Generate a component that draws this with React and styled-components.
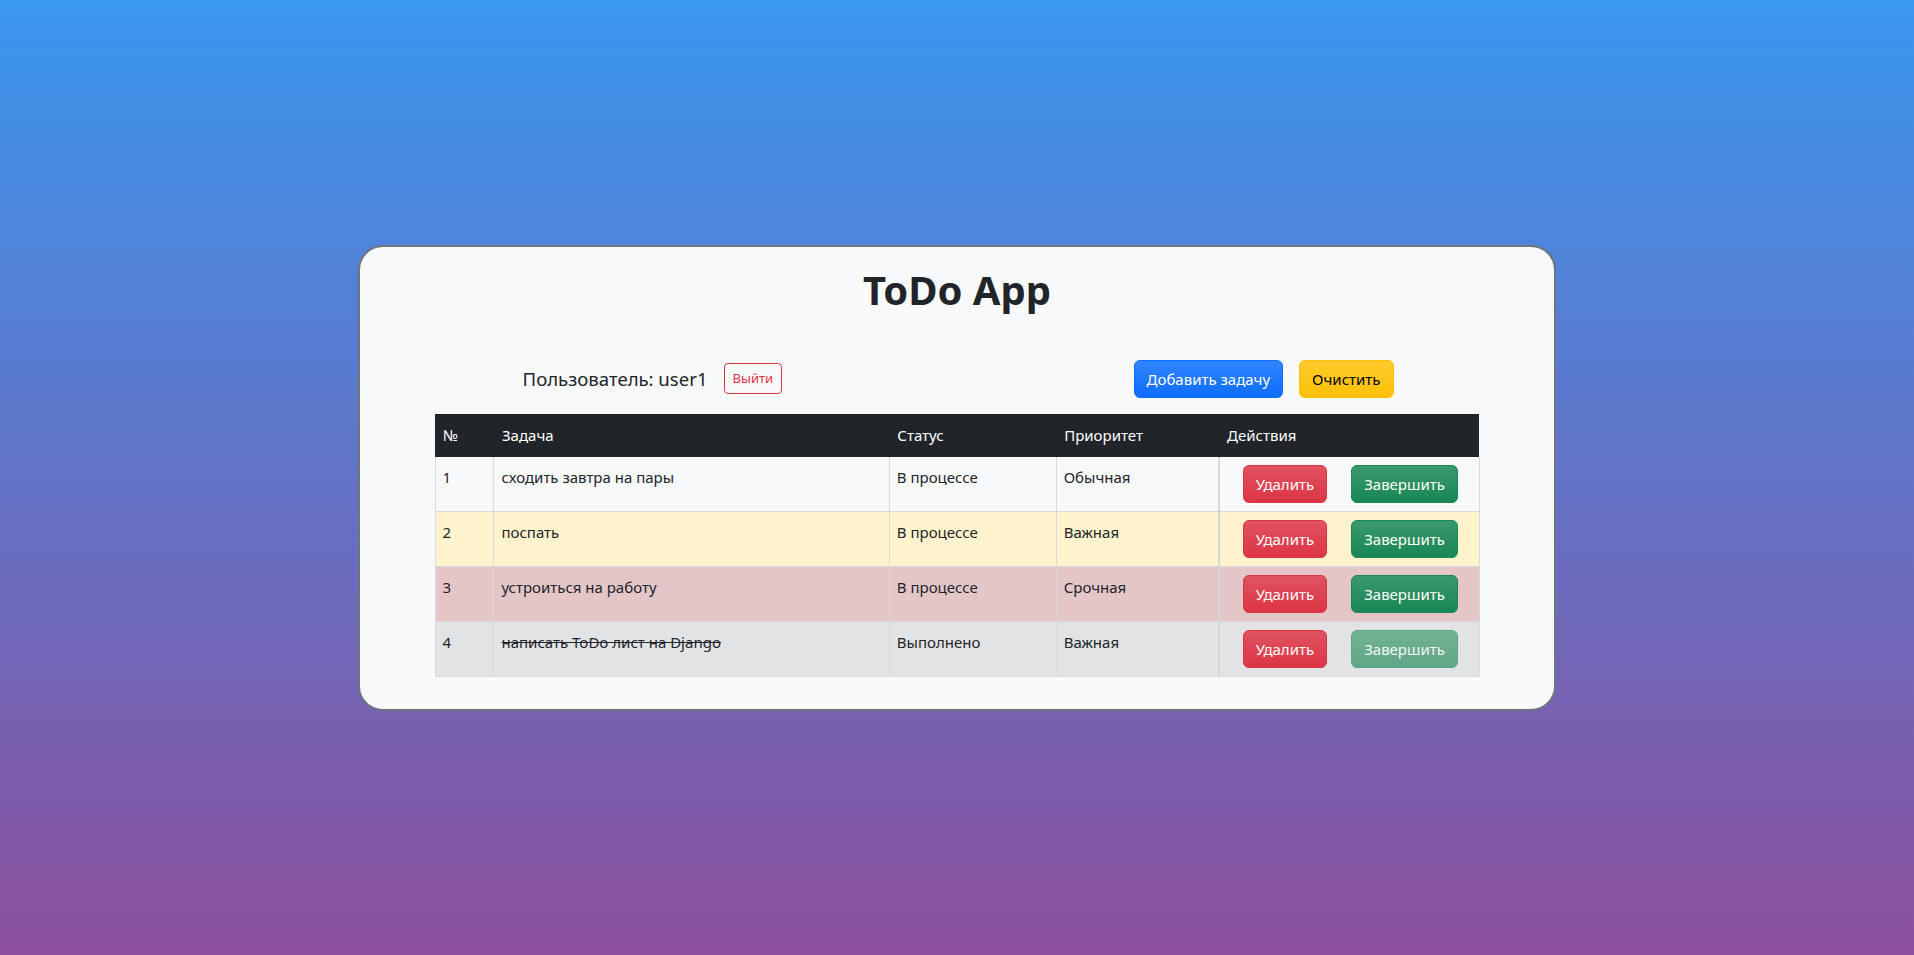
import React from "react";
import styled, { createGlobalStyle } from "styled-components";

const GlobalStyle = createGlobalStyle`
  * { box-sizing: border-box; }
  html, body { margin: 0; padding: 0; }
  body {
    font-family: "Noto Sans", "Open Sans", sans-serif;
    font-size: 15px;
    line-height: 1.5;
    color: #212529;
    background: linear-gradient(180deg, #3a97ef 0%, #8c4f9d 100%);
    min-height: 100vh;
  }
`;

const Page = styled.div`
  min-height: 100vh;
  display: flex;
  align-items: center;
  justify-content: center;
`;

const Card = styled.div`
  width: 1198px;
  background: #f8f9fa;
  border: 2px solid #6c757d;
  border-radius: 25px;
  padding: 19px 0 32px;
`;

const Title = styled.h1`
  margin: 0;
  text-align: center;
  font-size: 40px;
  line-height: 48px;
  font-weight: 700;
  color: #212529;
`;

const Toolbar = styled.div`
  width: 1045px;
  margin: 46px auto 0;
  padding: 0 86px 0 88px;
  display: flex;
  align-items: center;
  justify-content: space-between;
`;

const UserGroup = styled.div`
  display: flex;
  align-items: center;
  gap: 16px;
`;

const UserName = styled.span`
  font-size: 18.6px;
  line-height: 30px;
`;

const ButtonGroup = styled.div`
  display: flex;
  align-items: center;
  gap: 16px;
`;

const palette = {
  primary: { bg: "#0d6efd", fg: "#fff" },
  warning: { bg: "#ffc107", fg: "#000" },
  danger: { bg: "#dc3545", fg: "#fff" },
  success: { bg: "#198754", fg: "#fff" },
};

const Button = styled.button`
  font-family: inherit;
  font-size: 15px;
  line-height: 24px;
  padding: 6px 12px;
  border-radius: 6px;
  border: 1px solid ${(p) => palette[p.$variant].bg};
  color: ${(p) => palette[p.$variant].fg};
  background: linear-gradient(180deg, rgba(255, 255, 255, 0.15), rgba(255, 255, 255, 0)),
    ${(p) => palette[p.$variant].bg};
  opacity: ${(p) => (p.disabled ? 0.65 : 1)};
  cursor: pointer;
  white-space: nowrap;
`;

const OutlineButton = styled.button`
  font-family: inherit;
  font-size: 13px;
  line-height: 21px;
  padding: 4px 8px;
  border-radius: 4px;
  border: 1px solid #dc3545;
  color: #dc3545;
  background: transparent;
  cursor: pointer;
`;

const Table = styled.table`
  width: 1045px;
  margin: 16px auto 0;
  border-collapse: collapse;
  font-size: 15px;
`;

const HeadCell = styled.th`
  background: #212529;
  color: #fff;
  font-weight: 400;
  text-align: left;
  padding: 9px 8px 10px;
  line-height: 24px;
  border-bottom: 0;
`;

const rowColors = {
  normal: "#f8f9fa",
  important: "#fff3cd",
  urgent: "#e5c6c8",
  done: "#e2e3e5",
};

const Row = styled.tr`
  background: ${(p) => rowColors[p.$kind]};
`;

const Cell = styled.td`
  padding: 8px 8px 8px 7px;
  line-height: 24px;
  vertical-align: top;
  border: 1px solid #d8d9da;
  border-top: 0;
  text-decoration: ${(p) => (p.$strike ? "line-through" : "none")};
`;

const ActionCell = styled.td`
  padding: 8px 8px 8px;
  border: 1px solid #d8d9da;
  border-left: 2px solid #d6d6d6;
  border-top: 0;
`;

const Actions = styled.div`
  display: flex;
  justify-content: center;
  gap: 24px;
  padding-left: 2px;
`;

const tasks = [
  { id: 1, title: "сходить завтра на пары", status: "В процессе", priority: "Обычная", kind: "normal" },
  { id: 2, title: "поспать", status: "В процессе", priority: "Важная", kind: "important" },
  { id: 3, title: "устроиться на работу", status: "В процессе", priority: "Срочная", kind: "urgent" },
  { id: 4, title: "написать ToDo лист на Django", status: "Выполнено", priority: "Важная", kind: "done", done: true },
];

export default function App() {
  return (
    <>
      <GlobalStyle />
      <Page>
        <Card>
          <Title>ToDo App</Title>
          <Toolbar>
            <UserGroup>
              <UserName>Пользователь: user1</UserName>
              <OutlineButton>Выйти</OutlineButton>
            </UserGroup>
            <ButtonGroup>
              <Button $variant="primary">Добавить задачу</Button>
              <Button $variant="warning">Очистить</Button>
            </ButtonGroup>
          </Toolbar>
          <Table>
            <colgroup>
              <col style={{ width: 59 }} />
              <col style={{ width: 396 }} />
              <col style={{ width: 167 }} />
              <col style={{ width: 163 }} />
              <col style={{ width: 260 }} />
            </colgroup>
            <thead>
              <tr>
                <HeadCell>№</HeadCell>
                <HeadCell>Задача</HeadCell>
                <HeadCell>Статус</HeadCell>
                <HeadCell>Приоритет</HeadCell>
                <HeadCell>Действия</HeadCell>
              </tr>
            </thead>
            <tbody>
              {tasks.map((t) => (
                <Row key={t.id} $kind={t.kind}>
                  <Cell>{t.id}</Cell>
                  <Cell $strike={t.done}>{t.title}</Cell>
                  <Cell>{t.status}</Cell>
                  <Cell>{t.priority}</Cell>
                  <ActionCell>
                    <Actions>
                      <Button $variant="danger">Удалить</Button>
                      <Button $variant="success" disabled={t.done}>
                        Завершить
                      </Button>
                    </Actions>
                  </ActionCell>
                </Row>
              ))}
            </tbody>
          </Table>
        </Card>
      </Page>
    </>
  );
}
